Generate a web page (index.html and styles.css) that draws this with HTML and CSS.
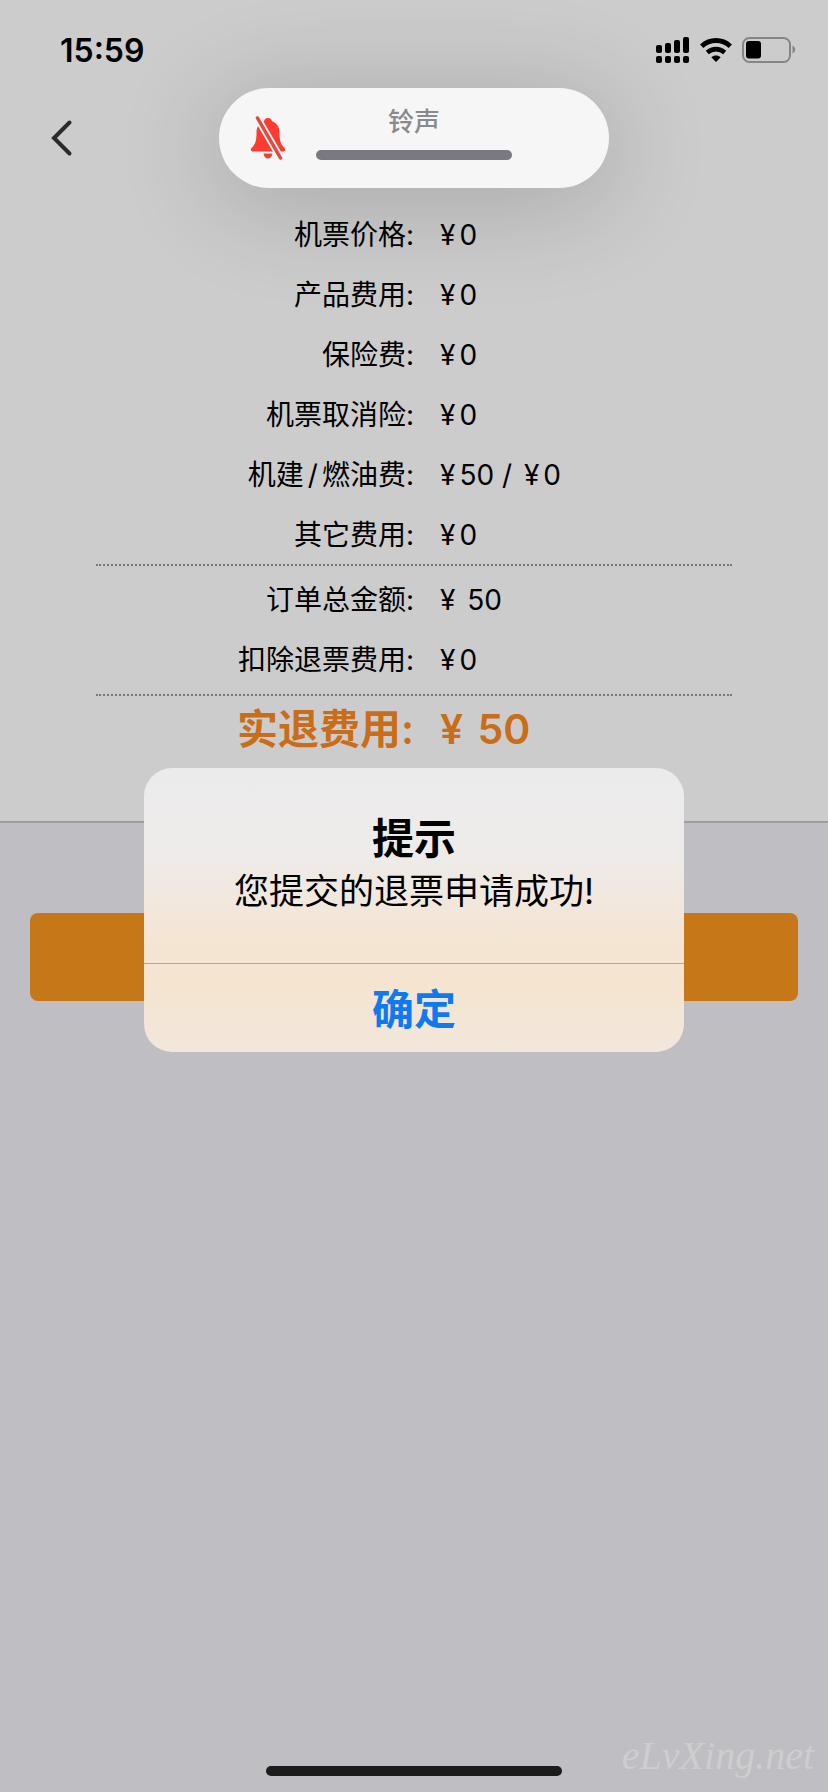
FILE: index.html
```html
<!DOCTYPE html>
<html lang="zh-CN">
<head>
<meta charset="utf-8">
<meta name="viewport" content="width=device-width, initial-scale=1">
<title>退票申请</title>
<link rel="stylesheet" href="styles.css">
</head>
<body>
<div class="screen">
  <header class="top">
    <div class="status">
      <time class="clock">15:59</time>
      <div class="indicators">
        <svg width="34" height="26" viewBox="0 0 34 26" aria-hidden="true">
          <g fill="#000">
            <rect x="0" y="8" width="6" height="8" rx="2"/><rect x="9" y="6" width="6" height="10" rx="2"/><rect x="18" y="3" width="6" height="13" rx="2"/><rect x="27" y="0" width="6" height="16" rx="2"/>
            <rect x="0" y="19" width="6" height="7" rx="2"/><rect x="9" y="19" width="6" height="7" rx="2"/><rect x="18" y="19" width="6" height="7" rx="2"/><rect x="27" y="19" width="6" height="7" rx="2"/>
          </g>
        </svg>
        <svg class="wifi" width="32" height="24" viewBox="0 0 32 24" aria-hidden="true">
          <path d="M1.700 8.200C10 .6 22 .6 30.300 8.200" fill="none" stroke="#000" stroke-width="4.800"/>
          <path d="M7.300 14.500C12.500 10 19.500 10 24.700 14.500" fill="none" stroke="#000" stroke-width="4.600"/>
          <path d="M11.300 19.200C14 16.900 18 16.900 20.700 19.200L16 24Z" fill="#000"/>
        </svg>
        <svg width="54" height="26" viewBox="0 0 54 26" aria-hidden="true">
          <rect x="1" y="1" width="47" height="24" rx="6.500" fill="none" stroke="#858585" stroke-width="2"/>
          <rect x="4" y="4" width="15" height="17.500" rx="3" fill="#000"/>
          <path d="M50.500 8.500C54 10 54 15 50.500 16.500Z" fill="#858585"/>
        </svg>
      </div>
    </div>
    <nav class="nav">
      <button class="back" type="button" aria-label="返回">
        <svg width="24" height="38" viewBox="0 0 24 38" aria-hidden="true"><path d="M19.500 3.500L4 19L19.500 34.500" fill="none" stroke="#2b2b2b" stroke-width="4" stroke-linecap="round" stroke-linejoin="miter"/></svg>
      </button>
    </nav>
  </header>

  <main class="content">
    <section class="fees">
      <dl class="group">
        <dt>机票价格:</dt><dd><span class="yen">¥</span>0</dd>
        <dt>产品费用:</dt><dd><span class="yen">¥</span>0</dd>
        <dt>保险费:</dt><dd><span class="yen">¥</span>0</dd>
        <dt>机票取消险:</dt><dd><span class="yen">¥</span>0</dd>
        <dt>机建<span class="slash">/</span>燃油费:</dt><dd><span class="yen">¥</span>50 / <span class="yen second">¥</span>0</dd>
        <dt>其它费用:</dt><dd><span class="yen">¥</span>0</dd>
      </dl>
      <dl class="group ruled">
        <dt>订单总金额:</dt><dd><span class="yen">¥</span> 50</dd>
        <dt>扣除退票费用:</dt><dd><span class="yen">¥</span>0</dd>
      </dl>
      <dl class="group ruled total">
        <dt>实退费用:</dt><dd><span class="yen">¥</span> 50</dd>
      </dl>
    </section>
    <div class="actions">
      <button class="submit" type="button" aria-label="提交"></button>
    </div>
  </main>

  <div class="home"></div>
  <div class="watermark">eLvXing.net</div>

  <div class="hud" role="status">
    <svg class="bell" width="36" height="44" viewBox="0 0 36 44" aria-hidden="true">
      <path d="M18 2C20.500 2 21.800 3.600 22 5.200C27 7 29.500 11 29.500 16.500C29.500 25 30.500 28 34.500 32Q36.500 34.500 33.500 35.500H2.500Q-.5 34.500 1.500 32C5.500 28 6.500 25 6.500 16.500C6.500 11 9 7 14 5.200C14.200 3.600 15.500 2 18 2Z" fill="#fd3b30"/>
      <path d="M13.500 37.500H22.500C22 41 20.500 42.500 18 42.500S14 41 13.500 37.500Z" fill="#e3473d"/>
      <path d="M5 -2L33 46" stroke="#f6f6f6" stroke-width="7"/>
      <path d="M7.500 2L30.500 42" stroke="#e3473d" stroke-width="3.500" stroke-linecap="round"/>
    </svg>
    <div class="level">
      <span class="level-name">铃声</span>
      <span class="level-bar"></span>
    </div>
  </div>

  <div class="overlay">
    <div class="alert" role="alertdialog" aria-labelledby="alert-title" aria-describedby="alert-text">
      <div class="alert-body">
        <h1 class="alert-title" id="alert-title">提示</h1>
        <p class="alert-text" id="alert-text">您提交的退票申请成功!</p>
      </div>
      <button class="alert-ok" type="button">确定</button>
    </div>
  </div>
</div>
</body>
</html>
```
FILE: styles.css
```css
* {
  box-sizing: border-box;
}

body {
  margin: 0;
  background: #bfbec3;
  color: #000;
  font-family: Inter, "Noto Sans CJK SC", sans-serif;
  font-size: 28px;
}

button {
  border: 0;
  padding: 0;
  background: none;
  font: inherit;
  cursor: pointer;
}

.screen {
  position: relative;
  display: flex;
  flex-direction: column;
  min-height: 100vh;
  overflow: hidden;
}

.top {
  background: #ccc;
}

.status {
  display: flex;
  justify-content: space-between;
  align-items: center;
  height: 88px;
  padding: 12px 32px 0 60px;
}

.clock {
  font-size: 32px;
  font-weight: 600;
}

.indicators {
  display: flex;
  align-items: center;
  gap: 10px;
}

.nav {
  display: flex;
  align-items: center;
  height: 100px;
  padding-left: 50px;
}

.back {
  display: flex;
}

.content {
  flex: 1;
}

.fees {
  padding: 17px 96px 58px;
  background: #ccc;
  border-bottom: 2px solid #9e9ea1;
}

.group {
  display: grid;
  grid-template-columns: 1fr 1fr;
  column-gap: 26px;
  margin: 0;
  line-height: 60px;
}

.group dt {
  text-align: right;
  white-space: nowrap;
  margin-right: -13px;
}

.group dd {
  margin: 0 0 0 13px;
  white-space: nowrap;
}

.slash {
  margin: 0 4px;
}

.yen {
  margin-right: 4px;
}

.second {
  margin-left: 4px;
}

.ruled {
  padding: 4px 0;
  border-top: 2px dotted #777;
}

.group:first-child {
  margin-bottom: -1px;
}

.total {
  padding: 0;
  line-height: 67px;
  color: #c86e1a;
  font-size: 41px;
  font-weight: 600;
}

.actions {
  padding: 90px 30px;
}

.submit {
  display: block;
  width: 100%;
  height: 88px;
  border-radius: 8px;
  background: #c67818;
}

.watermark {
  position: absolute;
  right: 14px;
  bottom: 16px;
  color: #cecdcf;
  font-family: "Liberation Serif", serif;
  font-size: 40px;
  font-style: italic;
  line-height: 40px;
}

.home {
  align-self: center;
  width: 296px;
  height: 10px;
  margin-bottom: 16px;
  border-radius: 5px;
  background: #1c1c1c;
}

.hud {
  position: absolute;
  top: 88px;
  left: 50%;
  display: grid;
  grid-template-columns: 1fr 196px 1fr;
  align-items: center;
  width: 390px;
  height: 100px;
  border-radius: 50px;
  background: #f6f6f6;
  box-shadow: 0 12px 100px 10px rgba(0, 0, 0, 0.16);
  transform: translateX(-50%);
}

.bell {
  justify-self: center;
}

.level {
  display: flex;
  flex-direction: column;
  align-items: center;
  gap: 12px;
  padding-bottom: 10px;
}

.level-name {
  color: #8a898e;
  font-size: 26px;
  font-weight: 500;
  line-height: 32px;
}

.level-bar {
  width: 100%;
  height: 10px;
  border-radius: 5px;
  background: #7a797f;
}

.overlay {
  position: absolute;
  inset: 0;
  display: flex;
  justify-content: center;
  align-items: flex-start;
  padding: 768px 24px 24px;
}

.alert {
  width: 100%;
  max-width: 540px;
  overflow: hidden;
  border-radius: 28px;
  background: linear-gradient(#ecebec 0%, #eeebea 30%, #f4e5d4 60%, #f5e4cf 75%, #f2e7dc 100%);
  text-align: center;
}

.alert-body {
  padding: 43px 24px 48px;
}

.alert-title {
  margin: 0;
  font-size: 42px;
  font-weight: 600;
  line-height: 56px;
}

.alert-text {
  margin: 0;
  font-size: 35px;
  line-height: 48px;
}

.alert-ok {
  width: 100%;
  height: 89px;
  padding-bottom: 4px;
  border-top: 1px solid #bba58b;
  color: #0f7af0;
  font-size: 42px;
  font-weight: 600;
}
```
